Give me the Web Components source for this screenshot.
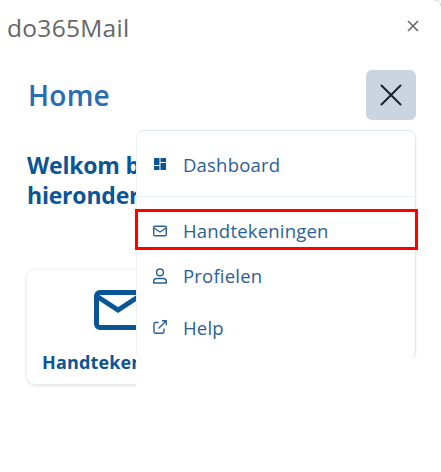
<!DOCTYPE html>
<html>
<head>
<meta charset="utf-8">
<title>do365Mail</title>
<style>
  html,body{margin:0;padding:0;background:#fff;}
  body{width:441px;height:472px;overflow:hidden;font-family:"Open Sans","Noto Sans",sans-serif;}
</style>
</head>
<body>
<pane-window>
  <home-page></home-page>
</pane-window>
<script>
class PaneWindow extends HTMLElement{
  connectedCallback(){
    const shadowRoot = this.attachShadow({mode:'open'});
    shadowRoot.innerHTML = `
    <style>
      :host{display:block;height:472px;}
      header{display:flex;justify-content:space-between;align-items:center;height:56px;padding:0 22px 0 7px;}
      strong{font:400 24.5px/1 "Open Sans",sans-serif;color:#666;letter-spacing:.3px;}
      svg{display:block;margin-bottom:4px;}
      .corner{position:absolute;right:0;top:0;width:5px;height:5px;border:solid #ddd;border-width:1px 1px 0 0;border-top-right-radius:5px;}
    </style>
    <div class="corner"></div>
    <header>
      <strong>do365Mail</strong>
      <svg width="12" height="12" viewBox="0 0 12 12"><path d="M1 1l10 10M11 1L1 11" stroke="#666" stroke-width="1.6"/></svg>
    </header>
    <slot></slot>`;
  }
}
customElements.define('pane-window',PaneWindow);

class MenuItem extends HTMLElement{
  connectedCallback(){
    const shadowRoot = this.attachShadow({mode:'open'});
    shadowRoot.innerHTML = `
    <style>
      :host{display:flex;align-items:center;gap:15px;padding-left:15px;color:#2a6098;font:400 18.5px/24px "Open Sans",sans-serif;letter-spacing:.2px;}
      .ico{width:16px;height:16px;flex:none;display:flex;}
    </style>
    <span class="ico"><slot name="icon"></slot></span>
    <slot></slot>`;
  }
}
customElements.define('menu-item',MenuItem);

class NavMenu extends HTMLElement{
  connectedCallback(){
    const shadowRoot = this.attachShadow({mode:'open'});
    shadowRoot.innerHTML = `
    <style>
      :host{position:absolute;left:136px;top:130px;width:280px;height:229px;box-sizing:border-box;background:#fff;border:1px solid #e2e8f0;border-left-color:#edf1f6;border-bottom-color:#f6f7f9;border-radius:8px;box-shadow:1px 1px 2px rgba(0,0,0,.04);display:block;}
      /* the panel stays white below its border and covers the card */
      :host::after{content:"";position:absolute;left:-1px;right:-1px;top:100%;height:32px;background:#fff;}
      .top{height:66px;display:flex;align-items:flex-start;border-bottom:1px solid #edf2f7;box-sizing:border-box;padding-top:22px;}
      .list{display:flex;flex-direction:column;}
      .a{margin-top:22px;}
      .b{margin-top:21px;}
      .c{margin-top:28px;}
      svg{display:block;}
    </style>
    <div class="top">
      <menu-item>
        <svg slot="icon" width="16" height="16" viewBox="0 0 16 16" fill="#0a5596"><path d="M2 1h5.5v7H2zM2 9h5.5v4H2zM8.500 1H14v4H8.500zM8.500 6H14v7H8.500z"/></svg>
        Dashboard
      </menu-item>
    </div>
    <div class="list">
      <menu-item class="a">
        <svg slot="icon" width="16" height="16" viewBox="0 0 16 16" fill="none" stroke="#2a6098" stroke-width="1.4"><rect x="1.700" y="3.200" width="12.600" height="9.600" rx="1.400"/><path d="M2 5l6 4 6-4"/></svg>
        Handtekeningen
      </menu-item>
      <menu-item class="b">
        <svg slot="icon" width="16" height="16" viewBox="0 0 16 16" fill="none" stroke="#2a6098" stroke-width="1.4"><circle cx="8" cy="4.400" r="3.400"/><path d="M1.700 15v-1.600c0-1.700 1.300-2.900 2.900-2.900h6.800c1.600 0 2.900 1.200 2.900 2.900V15z"/></svg>
        Profielen
      </menu-item>
      <menu-item class="c">
        <svg slot="icon" width="16" height="16" viewBox="0 0 16 16" fill="none" stroke="#2a6098" stroke-width="1.4"><path d="M6.500 2.500H3.400c-.8 0-1.400.6-1.400 1.400v7.900c0 .8.6 1.400 1.400 1.400h7.200c.8 0 1.400-.6 1.400-1.400V8.500M6.500 8.500L14 1M9.800 .8h4.400v4.400"/></svg>
        Help
      </menu-item>
    </div>`;
  }
}
customElements.define('nav-menu',NavMenu);

class HomeCard extends HTMLElement{
  connectedCallback(){
    const shadowRoot = this.attachShadow({mode:'open'});
    shadowRoot.innerHTML = `
    <style>
      :host{display:flex;flex-direction:column;align-items:center;width:182px;height:114px;box-sizing:border-box;background:#fff;border-radius:8px;box-shadow:0 1px 4px rgba(0,0,0,.14);padding-top:20px;}
      svg{display:block;margin-bottom:20px;}
      span{font:700 18px/24px "Open Sans",sans-serif;color:#0a5596;letter-spacing:.15px;white-space:nowrap;}
    </style>
    <svg width="48" height="40" viewBox="0 0 48 40" fill="none" stroke="#0a5596" stroke-width="5"><rect x="2.500" y="2.500" width="43" height="35" rx="3.500"/><path d="M4 7l20 13L44 7"/></svg>
    <span><slot></slot></span>`;
  }
}
customElements.define('home-card',HomeCard);

class HomePage extends HTMLElement{
  connectedCallback(){
    const shadowRoot = this.attachShadow({mode:'open'});
    shadowRoot.innerHTML = `
    <style>
      :host{display:block;padding:14px 25px 0 28px;}
      .head{display:flex;justify-content:space-between;align-items:center;height:50px;}
      h1{margin:0;font:600 28px/1 "Open Sans",sans-serif;color:#2b6cb0;letter-spacing:.25px;}
      button{width:50px;height:50px;border:0;border-radius:6px;background:#cbd5e0;padding:0;display:flex;align-items:center;justify-content:center;}
      h2{margin:30px 0 0 -1px;font:700 23px/30px "Open Sans",sans-serif;color:#0a5596;letter-spacing:-.2px;white-space:nowrap;}
      home-card{margin-top:60px;margin-left:-1px;}
      .mark{position:absolute;left:135px;top:209px;width:283px;height:41px;box-sizing:border-box;border:3px solid #f00;}
    </style>
    <div class="head">
      <h1>Home</h1>
      <button aria-label="Sluiten"><svg width="22" height="22" viewBox="0 0 22 22"><path d="M1.500 1.500l19 19M20.500 1.500l-19 19" stroke="#1a202c" stroke-width="2" stroke-linecap="round"/></svg></button>
    </div>
    <h2>Welkom bij<br>hieronder</h2>
    <home-card>Handtekeningen</home-card>
    <nav-menu></nav-menu>
    <div class="mark"></div>`;
  }
}
customElements.define('home-page',HomePage);
</script>
</body>
</html>
